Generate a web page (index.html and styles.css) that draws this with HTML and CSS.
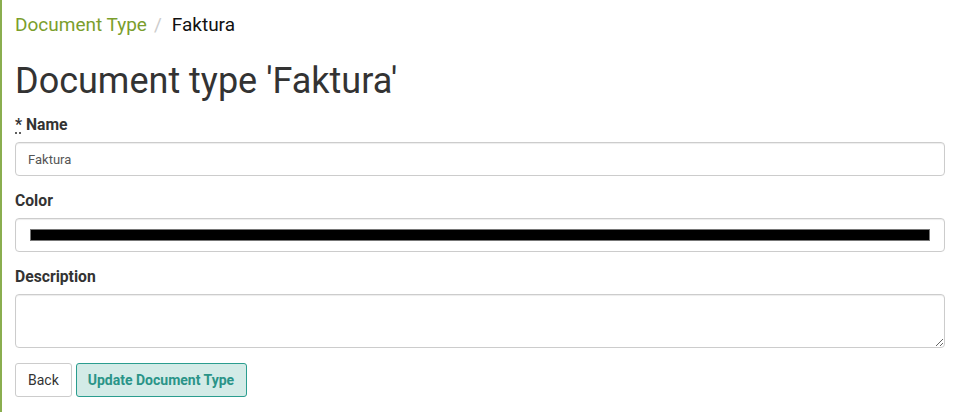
FILE: index.html
```html
<!DOCTYPE html>
<html>
<head>
<meta charset="utf-8">
<link rel="stylesheet" href="styles.css">
</head>
<body>
<div class="page">
  <ol class="breadcrumb">
    <li><a href="#">Document Type</a></li>
    <li class="sep">/</li>
    <li class="active">Faktura</li>
  </ol>
  <h1 class="title">Document type 'Faktura'</h1>
  <form class="form">
    <div class="group">
      <label class="label" for="name"><abbr title="required">*</abbr> Name</label>
      <input class="control" id="name" type="text" value="Faktura">
    </div>
    <div class="group">
      <label class="label" for="color">Color</label>
      <input class="control color" id="color" type="color" value="#000000">
    </div>
    <div class="group">
      <label class="label" for="desc">Description</label>
      <textarea class="control area" id="desc"></textarea>
    </div>
    <div class="actions">
      <a class="btn" href="#">Back</a>
      <button class="btn primary" type="button">Update Document Type</button>
    </div>
  </form>
</div>
</body>
</html>
```
FILE: styles.css
```css
html, body {
  margin: 0;
  padding: 0;
  background: #fff;
}
body {
  font-family: Roboto, "Liberation Sans", sans-serif;
  color: #333;
  font-size: 14px;
}
.page {
  border-left: 2px solid #8aae4f;
  padding: 0 9px 0 13px;
  min-height: 412px;
  box-sizing: border-box;
}
.breadcrumb {
  list-style: none;
  margin: 0;
  padding: 13px 0 0 0;
  display: flex;
  align-items: baseline;
  font-size: 19px;
  line-height: 24px;
}
.breadcrumb a {
  color: #7b9e2c;
  text-decoration: none;
}
.breadcrumb .sep {
  color: #ccc;
  padding: 0 10px 0 7px;
}
.breadcrumb .active {
  color: #111;
}
.title {
  font-size: 36px;
  font-weight: 400;
  line-height: 40px;
  margin: 24px 0 0 0;
  color: #333;
}
.form {
  margin-top: 14px;
}
.group {
  margin-bottom: 15px;
}
.label {
  display: block;
  font-weight: 700;
  font-size: 15.7px;
  line-height: 20px;
  margin-bottom: 7px;
  color: #333;
}
.label abbr {
  text-decoration: underline dotted;
  text-underline-offset: 3px;
  cursor: help;
}
.control {
  display: block;
  width: 100%;
  box-sizing: border-box;
  height: 34px;
  padding: 6px 12px;
  border: 1px solid #ccc;
  border-radius: 4px;
  font-family: Roboto, "Liberation Sans", sans-serif;
  font-size: 13px;
  color: #555;
  background: #fff;
  box-shadow: inset 0 1px 1px rgba(0,0,0,0.075);
}
.color {
  padding: 6px 12px;
}
.area {
  height: 54px;
  resize: vertical;
}
.actions {
  display: flex;
  gap: 4px;
  margin-top: 1px;
}
.btn {
  display: inline-flex;
  align-items: center;
  height: 34px;
  box-sizing: border-box;
  padding: 0 12px;
  border: 1px solid #ccc;
  border-radius: 3px;
  background: #fff;
  color: #333;
  font-family: Roboto, "Liberation Sans", sans-serif;
  font-size: 14px;
  text-decoration: none;
}
.btn.primary {
  background: #d3ebe7;
  border-color: #2a9d8f;
  color: #2a9488;
  font-weight: 700;
  padding: 0 12px 0 11px;
}
```
